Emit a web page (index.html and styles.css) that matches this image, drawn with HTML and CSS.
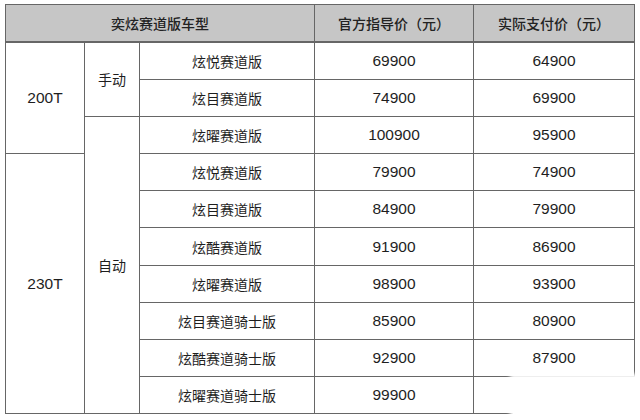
FILE: index.html
```html
<!DOCTYPE html>
<html lang="zh">
<head>
<meta charset="utf-8">
<link rel="stylesheet" href="styles.css">
</head>
<body>
<div class="wrap">
<table class="price">
  <colgroup>
    <col class="c1"><col class="c2"><col class="c3"><col class="c4"><col class="c5">
  </colgroup>
  <thead>
    <tr class="head">
      <th colspan="3">奕炫赛道版车型</th>
      <th>官方指导价（元）</th>
      <th>实际支付价（元）</th>
    </tr>
  </thead>
  <tbody>
    <tr>
      <td rowspan="3" class="num">200T</td>
      <td rowspan="2">手动</td>
      <td>炫悦赛道版</td><td class="num">69900</td><td class="num">64900</td>
    </tr>
    <tr><td>炫目赛道版</td><td class="num">74900</td><td class="num">69900</td></tr>
    <tr>
      <td rowspan="8">自动</td>
      <td>炫曜赛道版</td><td class="num">100900</td><td class="num">95900</td>
    </tr>
    <tr>
      <td rowspan="7" class="num">230T</td>
      <td>炫悦赛道版</td><td class="num">79900</td><td class="num">74900</td>
    </tr>
    <tr><td>炫目赛道版</td><td class="num">84900</td><td class="num">79900</td></tr>
    <tr><td>炫酷赛道版</td><td class="num">91900</td><td class="num">86900</td></tr>
    <tr><td>炫曜赛道版</td><td class="num">98900</td><td class="num">93900</td></tr>
    <tr><td>炫目赛道骑士版</td><td class="num">85900</td><td class="num">80900</td></tr>
    <tr><td>炫酷赛道骑士版</td><td class="num">92900</td><td class="num">87900</td></tr>
    <tr><td>炫曜赛道骑士版</td><td class="num">99900</td><td class="num"></td></tr>
  </tbody>
</table>
<div class="patch"></div>
</div>
</body>
</html>
```
FILE: styles.css
```css
html, body {
  margin: 0;
  padding: 0;
  background: #ffffff;
}
.wrap {
  position: relative;
  width: 640px;
  height: 420px;
  overflow: hidden;
  padding: 4px 0 0 5px;
  box-sizing: border-box;
}
.price {
  border-collapse: collapse;
  table-layout: fixed;
  width: 629px;
  font-family: "Liberation Sans", "Noto Sans CJK SC", sans-serif;
  color: #1e1e1e;
}
.c1 { width: 79px; }
.c2 { width: 55px; }
.c3 { width: 175px; }
.c4 { width: 159px; }
.c5 { width: 161px; }
.price th, .price td {
  border: 1px solid #666666;
  padding: 0;
  text-align: center;
  vertical-align: middle;
  font-size: 14px;
  font-weight: normal;
}
.price tr { height: 37.2px; }
.price .head { height: 37.5px; }
.price th {
  background: #c6c6c6;
  font-weight: 500;
  color: #222;
}
.price .num { font-size: 15.5px; }
.price tbody tr:first-child td { border-top-width: 2px; }
.patch {
  position: absolute;
  left: 513px;
  top: 377px;
  width: 140px;
  height: 60px;
  background: #ffffff;
  box-shadow: 0 0 4px 3px #ffffff;
}
```
